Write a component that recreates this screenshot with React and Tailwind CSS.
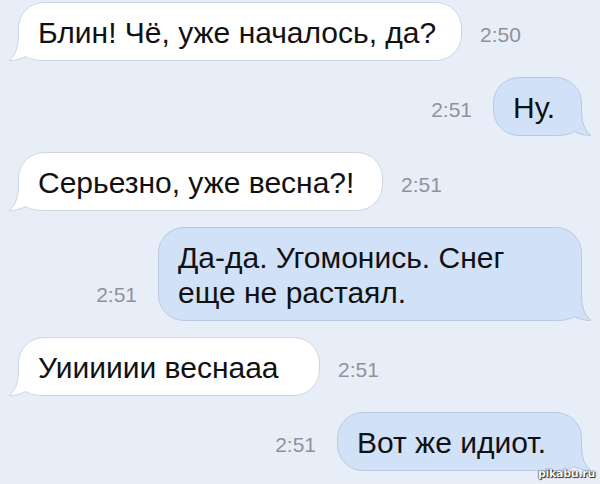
import React from 'react';

const messages = [
  { side: 'left', time: '2:50', w: 'w-[444px]', text: ['Блин! Чё, уже началось, да?'] },
  { side: 'right', time: '2:51', w: 'w-[89px]', text: ['Ну.'] },
  { side: 'left', time: '2:51', w: 'w-[365px]', text: ['Серьезно, уже весна?!'] },
  { side: 'right', time: '2:51', w: 'w-[424px]', text: ['Да-да. Угомонись. Снег', 'еще не растаял.'] },
  { side: 'left', time: '2:51', w: 'w-[302px]', text: ['Уииииии веснааа'] },
  { side: 'right', time: '2:51', w: 'w-[245px]', text: ['Вот же идиот.'] },
];

function Tail({ blue }) {
  const fill = blue ? '#d0e1f8' : '#ffffff';
  const stroke = blue ? '#b9cae0' : '#cfd6e0';
  return (
    <svg
      width="50"
      height="34"
      viewBox="0 0 50 34"
      className={blue ? 'absolute bottom-[-1px] right-[-11px] -scale-x-100' : 'absolute bottom-[-1px] left-[-11px]'}
    >
      <path
        d="M10.5 2 L10.5 6 C10.5 20 8 28 1 33.5 C7 33.5 13 32 18 29.5 C22 32.5 28 33.5 36 33.5 L48 33.5 L48 2 Z"
        fill={fill}
      />
      <path
        d="M10.5 2 L10.5 6 C10.5 20 8 28 1 33.5 C7 33.5 13 32 18 29.5 C22 32.5 28 33.5 36 33.5 L48 33.5"
        fill="none"
        stroke={stroke}
        strokeWidth="1"
      />
    </svg>
  );
}

function Time({ value, side }) {
  return (
    <span
      className={`pb-[16px] text-[21px] leading-none text-[#8e939b] ${side === 'left' ? 'ml-[18px]' : 'mr-[21px]'}`}
    >
      {value}
    </span>
  );
}

function Bubble({ side, lines, w }) {
  const blue = side === 'right';
  return (
    <div
      className={`relative shrink-0 rounded-[26px] border pt-[12px] pb-[10px] pl-[19px] text-[30px] leading-[35px] text-[#111] ${w} ${
        blue ? 'border-[#b9cae0] bg-[#d0e1f8]' : 'border-[#cfd6e0] bg-white'
      }`}
    >
      <Tail blue={blue} />
      <span className="relative z-10 block whitespace-nowrap">
        {lines.map((l, i) => (
          <span key={i} className="block">{l}</span>
        ))}
      </span>
    </div>
  );
}

export default function App() {
  return (
    <div className="relative flex h-[484px] w-[600px] flex-col gap-4 overflow-hidden bg-[#e8eef8] px-[18px] pt-[2px] font-['Liberation_Sans',Arial,sans-serif]">
      {messages.map((m, i) =>
        m.side === 'left' ? (
          <div key={i} className="flex items-end">
            <Bubble side="left" lines={m.text} w={m.w} />
            <Time value={m.time} side="left" />
          </div>
        ) : (
          <div key={i} className="flex items-end justify-end">
            <Time value={m.time} side="right" />
            <Bubble side="right" lines={m.text} w={m.w} />
          </div>
        )
      )}

      <span className="absolute bottom-[5px] right-[5px] font-['DejaVu_Sans',sans-serif] text-[11px] font-bold leading-none tracking-tight text-white [text-shadow:0_0_1px_#000,0_0_1px_#000,1px_1px_1px_#333]">
        pikabu.ru
      </span>
    </div>
  );
}
